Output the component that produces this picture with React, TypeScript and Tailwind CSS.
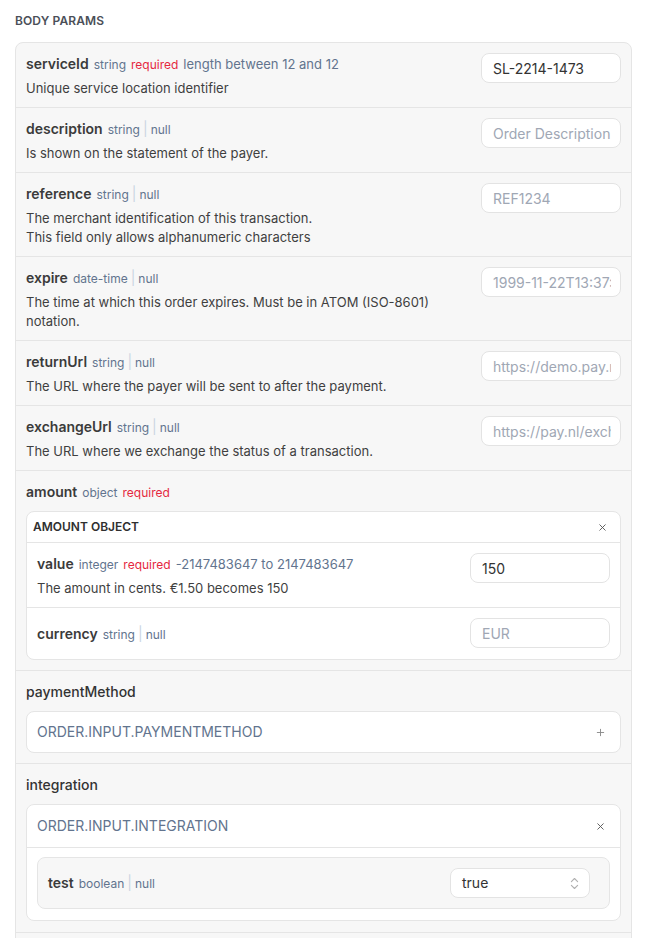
import React from 'react';
import { ChevronsUpDown, X, Plus } from 'lucide-react';

type Param = {
  name: string;
  type: string;
  nullable?: boolean;
  required?: boolean;
  constraint?: string;
  description?: string[];
  value?: string;
  placeholder?: string;
};

const params: Param[] = [
  {
    name: 'serviceId',
    type: 'string',
    required: true,
    constraint: 'length between 12 and 12',
    description: ['Unique service location identifier'],
    value: 'SL-2214-1473',
  },
  {
    name: 'description',
    type: 'string',
    nullable: true,
    description: ['Is shown on the statement of the payer.'],
    placeholder: 'Order Description',
  },
  {
    name: 'reference',
    type: 'string',
    nullable: true,
    description: [
      'The merchant identification of this transaction.',
      'This field only allows alphanumeric characters',
    ],
    placeholder: 'REF1234',
  },
  {
    name: 'expire',
    type: 'date-time',
    nullable: true,
    description: ['The time at which this order expires. Must be in ATOM (ISO-8601) notation.'],
    placeholder: '1999-11-22T13:37:00+01:00',
  },
  {
    name: 'returnUrl',
    type: 'string',
    nullable: true,
    description: ['The URL where the payer will be sent to after the payment.'],
    placeholder: 'https://demo.pay.nl/complete/',
  },
  {
    name: 'exchangeUrl',
    type: 'string',
    nullable: true,
    description: ['The URL where we exchange the status of a transaction.'],
    placeholder: 'https://pay.nl/exchange.php',
  },
];

const Meta: React.FC<{ p: Param }> = ({ p }) => (
  <div className="flex items-baseline gap-[5px] leading-5">
    <span className="text-sm font-semibold text-[#3b3b3b]">{p.name}</span>
    <span className="text-xs text-slate-500">
      {p.type}
      {p.nullable && (
        <>
          <span className="mx-[3px] text-[14px] text-slate-300">|</span>null
        </>
      )}
    </span>
    {p.required && <span className="text-xs text-[#e5283f]">required</span>}
    {p.constraint && <span className="text-[13px] text-slate-500">{p.constraint}</span>}
  </div>
);

const Field: React.FC<{ value?: string; placeholder?: string }> = ({ value, placeholder }) => (
  <input
    readOnly
    value={value ?? ''}
    placeholder={placeholder}
    className="h-[30px] w-[140px] shrink-0 rounded-lg border border-[#e3e3e3] bg-white pl-[11px] pr-[9px] text-sm text-[#333] placeholder:text-[#a0a7b4] outline-none"
  />
);

const ParamRow: React.FC<{ p: Param; last?: boolean }> = ({ p, last }) => (
  <div
    className={`flex justify-between gap-4 px-[10px] pt-[10px] ${
      p.description ? 'items-start pb-[9px]' : 'items-center pb-[10px]'
    } ${last ? 'pb-[11px]' : 'border-b border-[#e5e5e5]'}`}
  >
    <div className="flex min-w-0 flex-col gap-[5px] pt-px">
      <Meta p={p} />
      {p.description && (
        <div className="text-[13px] leading-[19px] text-[#3f3f3f]">
          {p.description.map((d) => (
            <div key={d}>{d}</div>
          ))}
        </div>
      )}
    </div>
    <Field value={p.value} placeholder={p.placeholder} />
  </div>
);

export default function App() {
  return (
    <div
      className="min-h-screen bg-white pb-10"
      style={{ fontFamily: 'Inter, "Noto Sans", "Liberation Sans", sans-serif' }}
    >
      <div className="ml-[15px] w-[617px]">
        <div className="pt-[14px] pb-[14px] text-xs font-semibold leading-[14px] tracking-[0.01em] text-[#4b4f58]">
          BODY PARAMS
        </div>

        <div className="overflow-hidden rounded-lg border border-[#e5e5e5] bg-[#f7f7f7]">
          {params.map((p) => (
            <ParamRow key={p.name} p={p} />
          ))}

          {/* amount */}
          <div className="border-b border-[#e5e5e5] px-[10px] pt-[11px] pb-[10px]">
            <Meta p={{ name: 'amount', type: 'object', required: true }} />
            <div className="mt-[9px] overflow-hidden rounded-lg border border-[#e5e5e5] bg-white">
              <div className="flex h-[31px] items-center justify-between border-b border-[#e5e5e5] pl-[6px] pr-[12px]">
                <span className="text-xs font-semibold text-[#2f2f2f]">AMOUNT OBJECT</span>
                <X className="h-[11px] w-[11px] text-[#555]" strokeWidth={2} />
              </div>
              <ParamRow
                p={{
                  name: 'value',
                  type: 'integer',
                  required: true,
                  constraint: '-2147483647 to 2147483647',
                  description: ['The amount in cents. €1.50 becomes 150'],
                  value: '150',
                }}
              />
              <ParamRow last p={{ name: 'currency', type: 'string', nullable: true, placeholder: 'EUR' }} />
            </div>
          </div>

          {/* paymentMethod */}
          <div className="border-b border-[#e5e5e5] px-[10px] pt-[11px] pb-[10px]">
            <div className="text-sm font-medium leading-5 text-[#333]">paymentMethod</div>
            <div className="mt-[9px] flex h-[42px] items-center justify-between rounded-lg border border-[#e5e5e5] bg-white pl-[10px] pr-[14px]">
              <span className="text-sm text-slate-500">ORDER.INPUT.PAYMENTMETHOD</span>
              <Plus className="h-[11px] w-[11px] text-[#888]" strokeWidth={2} />
            </div>
          </div>

          {/* integration */}
          <div className="border-b border-[#e5e5e5] px-[10px] pt-[11px] pb-[11px]">
            <div className="text-sm font-medium leading-5 text-[#333]">integration</div>
            <div className="mt-[9px] overflow-hidden rounded-lg border border-[#e5e5e5] bg-white">
              <div className="flex h-[43px] items-center justify-between border-b border-[#e5e5e5] pl-[10px] pr-[14px]">
                <span className="text-sm text-slate-500">ORDER.INPUT.INTEGRATION</span>
                <X className="h-[11px] w-[11px] text-[#555]" strokeWidth={2} />
              </div>
              <div className="px-[10px] pt-[9px] pb-[11px]">
                <div className="flex items-center justify-between rounded-lg border border-[#e5e5e5] bg-[#f7f7f7] py-[10px] pl-[10px] pr-[19px]">
                  <Meta p={{ name: 'test', type: 'boolean', nullable: true }} />
                  <div className="flex h-[30px] w-[140px] items-center justify-between rounded-lg border border-[#e3e3e3] bg-white pl-[11px] pr-[7px]">
                    <span className="text-sm text-[#333]">true</span>
                    <ChevronsUpDown className="h-[15px] w-[15px] text-[#b0b0b0]" strokeWidth={1.75} />
                  </div>
                </div>
              </div>
            </div>
          </div>

          {/* next (cut off) */}
          <div className="px-[10px] pt-[11px] pb-[10px]">
            <Meta p={{ name: 'optimize', type: 'object', nullable: true }} />
          </div>
        </div>
      </div>
    </div>
  );
}
